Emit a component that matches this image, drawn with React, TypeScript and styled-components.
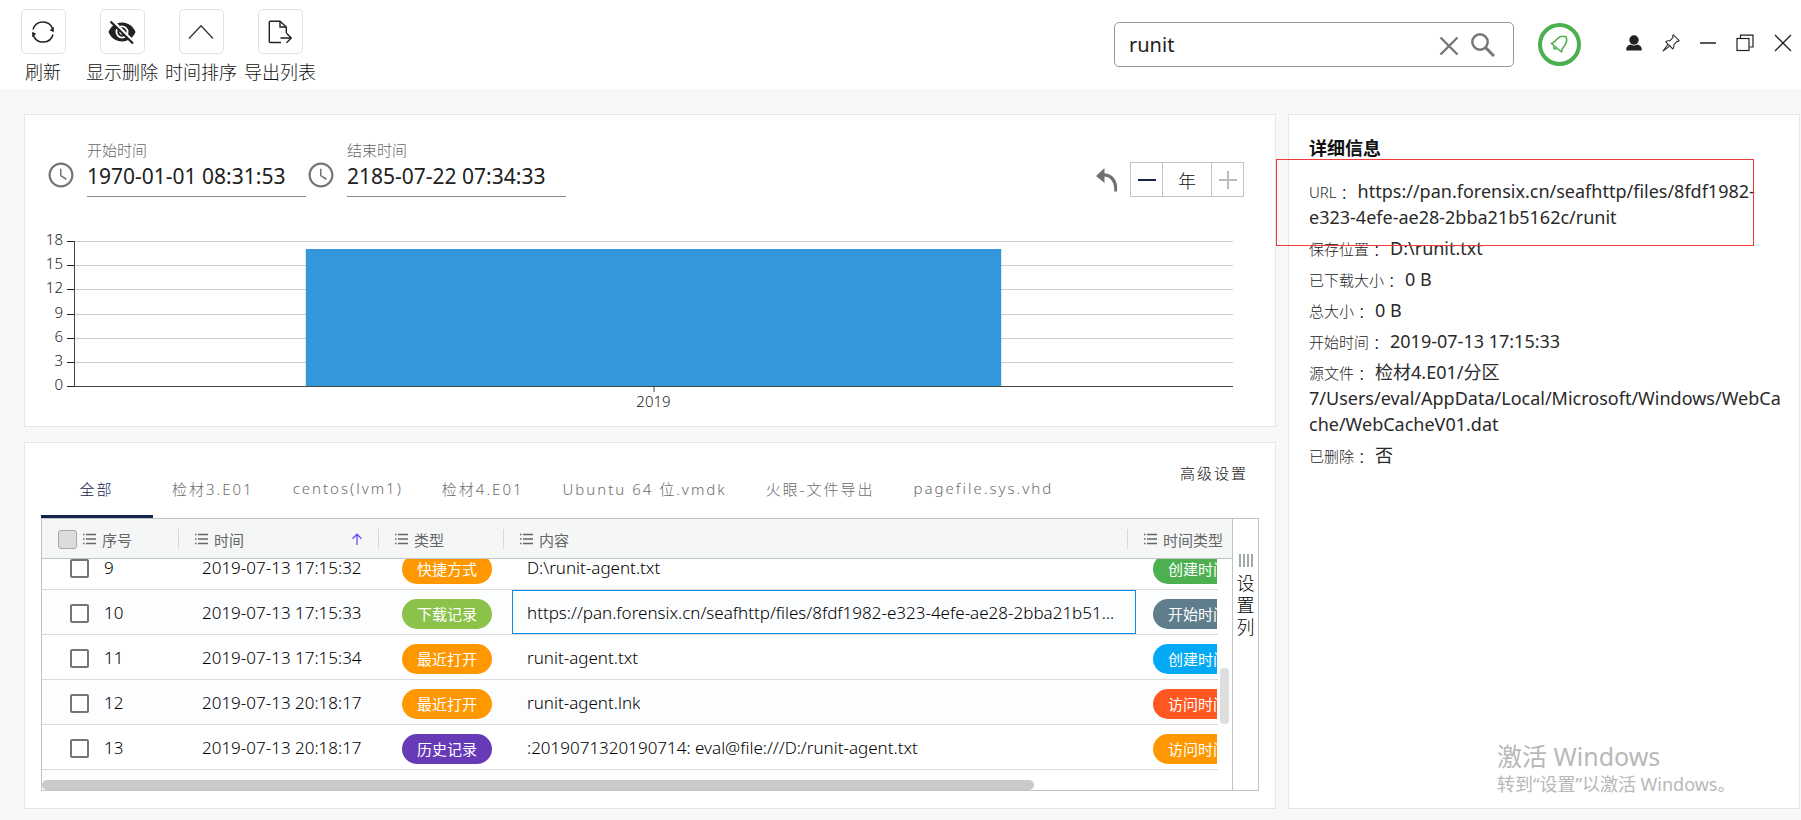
import React, { useLayoutEffect, useRef, useState } from "react";
import styled, { createGlobalStyle } from "styled-components";

const GlobalStyle = createGlobalStyle`
  *, *::before, *::after { box-sizing: border-box; }
  body {
    margin: 0;
    background: #f8f8f8;
    color: #111;
    font-family: "Noto Sans", "Noto Sans CJK SC", sans-serif;
    font-weight: 300;
    font-size: 18px;
  }
  button, input { font: inherit; color: inherit; }
`;

const Page = styled.div`
  min-height: 100vh;
  display: flex;
  flex-direction: column;
`;

/* ---------- top bar ---------- */

const TopBar = styled.header`
  height: 89px;
  flex: none;
  display: flex;
  align-items: flex-start;
  justify-content: space-between;
  background: #fff;
`;

const Tools = styled.nav`
  display: flex;
  gap: 7px;
  padding: 9px 0 0 7px;
`;

const ToolButton = styled.button`
  width: 72px;
  padding: 0;
  border: 0;
  background: none;
  display: flex;
  flex-direction: column;
  align-items: center;
  gap: 6px;
  line-height: 24px;
  white-space: nowrap;
  cursor: pointer;
`;

const ToolIcon = styled.span`
  width: 45px;
  height: 45px;
  border: 1px solid #e2e2e2;
  border-radius: 5px;
  display: flex;
  align-items: center;
  justify-content: center;
`;

const TopRight = styled.div`
  display: flex;
  align-items: center;
  padding: 22px 9px 0 0;
`;

const SearchBox = styled.form`
  width: 400px;
  height: 45px;
  display: flex;
  align-items: center;
  gap: 12px;
  padding: 0 18px 0 14px;
  border: 1px solid #999;
  border-radius: 5px;
  color: #757575;
`;

const SearchInput = styled.input`
  flex: 1;
  min-width: 0;
  padding: 0;
  border: 0;
  outline: 0;
  background: none;
  color: #212121;
  font-size: 20px;
  font-weight: 400;
  line-height: 28px;
`;

const IconButton = styled.button`
  padding: 0;
  border: 0;
  background: none;
  display: flex;
  cursor: pointer;
`;

const Bell = styled.button`
  width: 43px;
  height: 43px;
  margin: 0 45px 0 24px;
  padding: 0;
  border: 4px solid #4caf50;
  border-radius: 50%;
  background: #fff;
  color: #4caf50;
  display: flex;
  align-items: center;
  justify-content: center;
`;

const WindowControls = styled.div`
  display: flex;
  gap: 20px;
  padding-bottom: 4px;
`;

/* ---------- page body ---------- */

const Main = styled.main`
  flex: 1;
  display: grid;
  grid-template-columns: minmax(0, 1fr) 512px;
  gap: 12px;
  padding: 25px 1px 11px 24px;
`;

const LeftColumn = styled.div`
  display: flex;
  flex-direction: column;
  gap: 15px;
`;

const Panel = styled.section`
  background: #fff;
  border: 1px solid #e6e6e6;
`;

/* ---------- timeline ---------- */

const TimelinePanel = styled(Panel)`
  height: 313px;
  padding: 25px 31px 0 21px;
`;

const TimelineHead = styled.div`
  display: flex;
  align-items: flex-end;
`;

const ClockIcon = styled.svg`
  width: 30px;
  height: 30px;
  margin-bottom: 7px;
  fill: #757575;
  flex: none;
`;

const DateField = styled.label`
  width: 219px;
  margin-left: 11px;
  display: block;
  color: #666;
  font-size: 15px;
  line-height: 20px;
`;

const DateInput = styled.input`
  display: block;
  width: 100%;
  height: 37px;
  padding: 0 0 5px;
  border: 0;
  border-bottom: 1px solid #8c8c8c;
  outline: 0;
  background: none;
  color: #212121;
  font-size: 21px;
  font-weight: 400;
`;

const ZoomTools = styled.div`
  margin-left: auto;
  display: flex;
  align-items: center;
`;

const UndoButton = styled(IconButton)`
  margin-right: 12px;
`;

const ZoomButton = styled.button<{ $wide?: boolean }>`
  width: ${(p) => (p.$wide ? 50 : 33)}px;
  height: 35px;
  margin-left: -1px;
  padding: 0;
  border: 1px solid #c4c4c4;
  background: #fff;
  display: flex;
  align-items: center;
  justify-content: center;
`;

const Chart = styled.div`
  display: flex;
  margin: 28px 11px 0 0;
  height: 190px;
`;

const AxisSvg = styled.svg`
  width: 28px;
  height: 190px;
  flex: none;
  overflow: visible;
  font-size: 15px;
  fill: #222;
`;

const PlotSvg = styled.svg`
  flex: 1;
  min-width: 0;
  height: 190px;
  overflow: visible;
  font-size: 15px;
  fill: #222;
`;

/* ---------- records ---------- */

const RecordsPanel = styled(Panel)`
  flex: 1;
  display: flex;
  flex-direction: column;
  padding: 17px 16px 17px;
`;

const TabRow = styled.div`
  display: flex;
  align-items: flex-start;
  justify-content: space-between;
`;

const Tabs = styled.div`
  display: flex;
`;

const Tab = styled.button<{ $active?: boolean }>`
  min-width: ${(p) => (p.$active ? 112 : 0)}px;
  height: 58px;
  padding: 1px 20px 0 19px;
  border: 0;
  border-bottom: 3px solid ${(p) => (p.$active ? "#14234b" : "transparent")};
  background: none;
  color: ${(p) => (p.$active ? "#14234b" : "#6c6c6c")};
  font-size: 15px;
  letter-spacing: 2px;
  white-space: nowrap;
`;

const AdvancedButton = styled.button`
  padding: 0 11px 0 0;
  border: 0;
  background: none;
  font-size: 15px;
  line-height: 26px;
  letter-spacing: 2px;
`;

const GridFrame = styled.div`
  flex: 1;
  display: flex;
  min-height: 270px;
  border: 1px solid #bdc3c7;
`;

const GridArea = styled.div`
  position: relative;
  flex: 1;
  min-width: 0;
  display: flex;
  flex-direction: column;
`;

const Table = styled.table`
  display: block;
`;

const Head = styled.thead`
  display: block;
`;

const HeadRow = styled.tr`
  display: grid;
  grid-template-columns: 137px 200px 125px minmax(0, 1fr) 104px;
  height: 40px;
  background: #f5f7f7;
  border-bottom: 1px solid #bdc3c7;
`;

const HeadCell = styled.th`
  display: flex;
  align-items: center;
  gap: 6px;
  height: 20px;
  margin-top: 10px;
  padding: 0 16px;
  border-right: 1px solid #d5d9db;
  color: #666;
  font-size: 15px;
  font-weight: 400;
  white-space: nowrap;
  &:last-child { border-right: 0; padding-right: 0; }
  & > svg:last-child { margin-left: auto; }
`;

const Body = styled.tbody`
  display: block;
  height: 217px;
  margin-right: 14px;
  overflow: hidden;
`;

const Row = styled.tr<{ $even?: boolean }>`
  display: grid;
  grid-template-columns: 137px 200px 125px minmax(0, 1fr) 82px;
  height: 45px;
  padding-left: 8px;
  background: ${(p) => (p.$even ? "#fcfdfe" : "#fff")};
  border-bottom: 1px solid #d9dcde;
`;

const Cell = styled.td<{ $selected?: boolean }>`
  display: flex;
  align-items: center;
  min-width: 0;
  padding: 2px 14px 0;
  border: 1px solid ${(p) => (p.$selected ? "#0a8fe6" : "transparent")};
  overflow: hidden;
  color: #000;
  font-size: 17px;
  line-height: 24px;
  white-space: nowrap;
  &:last-child { padding-left: 16px; }
`;

const Ellipsis = styled.span`
  overflow: hidden;
  text-overflow: ellipsis;
`;

const NumberLabel = styled.label`
  display: flex;
  align-items: center;
  gap: 15px;
  padding-left: 5px;
`;

const Check = styled.input<{ $solid?: boolean }>`
  appearance: none;
  flex: none;
  width: 19px;
  height: 19px;
  margin: 0;
  border: ${(p) => (p.$solid ? "1px solid #a8a8a8" : "2px solid #757575")};
  border-radius: ${(p) => (p.$solid ? 3 : 2)}px;
  background: ${(p) => (p.$solid ? "#dcdcdc" : "#fff")};
`;

const Badge = styled.span<{ $color: string }>`
  flex: none;
  height: 30px;
  margin-top: 2px;
  padding: 0 15px;
  border-radius: 15px;
  background: ${(p) => p.$color};
  color: #fff;
  font-size: 15px;
  font-weight: 400;
  line-height: 30px;
`;

const VerticalThumb = styled.div`
  position: absolute;
  top: 149px;
  right: 3px;
  width: 9px;
  height: 56px;
  border-radius: 4px;
  background: #dedede;
`;

const HorizontalThumb = styled.div`
  width: 83.4%;
  height: 10px;
  margin-top: auto;
  border-radius: 5px;
  background: #cacaca;
`;

const SideBar = styled.aside`
  width: 26px;
  border-left: 1px solid #bdc3c7;
`;

const SideButton = styled.button`
  width: 100%;
  padding: 35px 0 0;
  border: 0;
  background: none;
  display: flex;
  flex-direction: column;
  align-items: center;
  gap: 5px;
`;

const SideLabel = styled.span`
  width: 18px;
  color: #000;
  line-height: 22px;
`;

/* ---------- details ---------- */

const Details = styled(Panel)`
  position: relative;
  padding: 21px 18px 0 20px;
`;

const DetailsTitle = styled.h2`
  margin: 0 0 18px;
  font-size: 18px;
  line-height: 24px;
  font-weight: 700;
`;

const Info = styled.p`
  margin: 0 0 5px;
  color: #2a2a2a;
  font-weight: 400;
  line-height: 26px;
  overflow-wrap: break-word;
`;

const InfoLabel = styled.span`
  color: #222;
  font-size: 15px;
  font-weight: 300;
  line-height: 18px;
`;

const Colon = styled.span`
  padding: 0 2px 0 4px;
`;

const Highlight = styled.div`
  position: absolute;
  left: -13px;
  top: 44px;
  width: 478px;
  height: 87px;
  border: 1px solid #f03c3c;
  pointer-events: none;
`;

const Watermark = styled.div`
  position: absolute;
  left: 208px;
  bottom: 11px;
  color: #b8b8b8;
  font-size: 18px;
  font-weight: 400;
  line-height: 26px;
`;

const WatermarkTitle = styled.div`
  font-size: 25px;
  line-height: 30px;
`;

/* ---------- icons ---------- */

const RefreshIcon = () => (
  <svg width="24" height="24" viewBox="0 0 24 24" fill="none" stroke="#212121" strokeWidth="1.5">
    <path d="M2 9.5A10.3 10.3 0 0 1 21.5 8.4" />
    <path d="M22 14.5A10.3 10.3 0 0 1 2.5 15.6" />
    <path d="M22.8 6.800v5.400l-4-2z M1.200 17.200v-5.400l4 2z" fill="#212121" stroke="none" />
  </svg>
);

const HiddenIcon = () => (
  <svg width="28" height="26" viewBox="0 0 28 26" fill="none">
    <path d="M0.5 13C3 7 8 3.500 14 3.500S25 7 27.500 13C25 19 20 22.500 14 22.500S3 19 .5 13z" fill="#212121" />
    <circle cx="14" cy="13" r="5.600" stroke="#fff" strokeWidth="1.800" />
    <circle cx="14" cy="13" r="2.600" fill="#fff" />
    <path d="M4.500 1.500l23 23" stroke="#fff" strokeWidth="2.500" />
    <path d="M2.500 2.500l22.500 22" stroke="#212121" strokeWidth="2.200" />
  </svg>
);

const UpIcon = () => (
  <svg width="26" height="16" viewBox="0 0 26 16" fill="none" stroke="#333" strokeWidth="1.300">
    <path d="M1 14.500L13 1.800 25 14.500" />
  </svg>
);

const ExportIcon = () => (
  <svg width="24" height="24" viewBox="0 0 24 24" fill="none" stroke="#212121" strokeWidth="1.400">
    <path d="M13 22.500H2.300q-1 0-1-1V2.200q0-1 1-1H12L18.300 7v6" />
    <path d="M12 1.500V7h6" />
    <path d="M12.500 18H23M18.500 13.200L23.300 18l-4.800 4.800" />
  </svg>
);

const ClearIcon = () => (
  <svg width="20" height="20" viewBox="0 0 20 20" stroke="currentColor" strokeWidth="2.300">
    <path d="M1.500 2.500l17 17M18.500 2.500l-17 17" />
  </svg>
);

const SearchIcon = () => (
  <svg width="24" height="24" viewBox="0 0 24 24" fill="none" stroke="currentColor">
    <circle cx="9" cy="9" r="7.700" strokeWidth="2.400" />
    <path d="M14.500 14.500l8.500 8.500" strokeWidth="3" />
  </svg>
);

const BellIcon = () => (
  <svg width="19" height="19" viewBox="0 0 19 19" fill="none" stroke="currentColor" strokeWidth="1.600" strokeLinejoin="round">
    <path d="M1.500 8.500C4.500 7 6 5.500 8 3.200 10 1 13.500 1 16 1.800c1 3 .8 6.200-1.200 8.400-2 2.300-3.200 4-3.300 6.800z" />
    <path d="M3.500 11.500c.2 2 1 2.800 3 2.500" />
  </svg>
);

const UserIcon = () => (
  <svg width="16" height="18" viewBox="0 0 16 18" fill="#212121">
    <circle cx="8" cy="6" r="4.700" />
    <path d="M.3 16.500v-1.700c0-2.300 2.200-3.800 4.500-4.300q3.200 2 6.400 0c2.300.5 4.500 2 4.500 4.300v1.700z" />
  </svg>
);

const PinIcon = () => (
  <svg width="18" height="18" viewBox="0 0 18 18" fill="none" stroke="#333" strokeWidth="1.100" strokeLinejoin="round">
    <path d="M11.300.8l5.900 5.900-1.300.8-.8-.3-3.300 3.600c.5 1.800.2 3-.9 4.200L3.700 7.800C4.900 6.700 6 6.500 7.800 6.900l3.300-3.500-.5-1.400z" />
    <path d="M6 10.300L1 17l6.700-4.900" />
  </svg>
);

const MinimizeIcon = () => (
  <svg width="16" height="18" viewBox="0 0 16 18" stroke="#212121" strokeWidth="1.500">
    <path d="M0 9h16" />
  </svg>
);

const RestoreIcon = () => (
  <svg width="18" height="18" viewBox="0 0 18 18" fill="none" stroke="#212121" strokeWidth="1.200">
    <rect x="1" y="4.500" width="12" height="12" />
    <path d="M4.500 4V1.200H17V13h-3.500" />
  </svg>
);

const CloseIcon = () => (
  <svg width="18" height="18" viewBox="0 0 18 18" stroke="#212121" strokeWidth="1.300">
    <path d="M1 1l16 16M17 1L1 17" />
  </svg>
);

const UndoIcon = () => (
  <svg width="23" height="25" viewBox="0 0 23 25" fill="#707070">
    <path d="M0 9L8.500 1v5.200C16.500 7 22.500 13 21 24.500h-2.800C18.800 15.500 15 10.200 8.500 9.500v6.500z" />
  </svg>
);

const MenuIcon = () => (
  <svg width="13" height="12" viewBox="0 0 13 12" stroke="#666" strokeWidth="1.400">
    <path d="M0 1.500h1.500M3 1.500h10M0 6h1.500M3 6h10M0 10.500h1.500M3 10.500h10" />
  </svg>
);

const SortIcon = () => (
  <svg width="10" height="12" viewBox="0 0 10 12" fill="none" stroke="#6a4df5" strokeWidth="1.300">
    <path d="M5 12V1.200M.5 5.700L5 1.200l4.500 4.500" />
  </svg>
);

const ColumnsIcon = () => (
  <svg width="14" height="13" viewBox="0 0 14 13" stroke="#7f8c8d" strokeWidth="1.500">
    <path d="M1 0v13M5 0v13M9 0v13M13 0v13" />
  </svg>
);

const Clock = () => (
  <ClockIcon viewBox="0 0 24 24" aria-hidden="true">
    <path d="M11.99 2C6.47 2 2 6.480 2 12s4.470 10 9.990 10C17.520 22 22 17.520 22 12S17.520 2 11.990 2zM12 20.200c-4.500 0-8.200-3.700-8.200-8.200S7.500 3.800 12 3.800s8.200 3.700 8.200 8.200-3.700 8.200-8.200 8.200zM12.400 7H11.200v5.700l4.800 3.200.7-1.100-4.300-2.700z" />
  </ClockIcon>
);

/* ---------- data ---------- */

const tools = [
  { label: "刷新", icon: <RefreshIcon /> },
  { label: "显示删除", icon: <HiddenIcon /> },
  { label: "时间排序", icon: <UpIcon /> },
  { label: "导出列表", icon: <ExportIcon /> },
];

const tabs = ["全部", "检材3.E01", "centos(lvm1)", "检材4.E01", "Ubuntu 64 位.vmdk", "火眼-文件导出", "pagefile.sys.vhd"];

const fileUrl = "https://pan.forensix.cn/seafhttp/files/8fdf1982-e323-4efe-ae28-2bba21b5162c/runit";

const records = [
  { no: 9, time: "2019-07-13 17:15:32", type: "快捷方式", color: "#ff9800", text: "D:\\runit-agent.txt", kind: "创建时间", kindColor: "#4caf50" },
  { no: 10, time: "2019-07-13 17:15:33", type: "下载记录", color: "#8bc34a", text: fileUrl, kind: "开始时间", kindColor: "#607d8b" },
  { no: 11, time: "2019-07-13 17:15:34", type: "最近打开", color: "#ff9800", text: "runit-agent.txt", kind: "创建时间", kindColor: "#03a9f4" },
  { no: 12, time: "2019-07-13 20:18:17", type: "最近打开", color: "#ff9800", text: "runit-agent.lnk", kind: "访问时间", kindColor: "#ff5722" },
  { no: 13, time: "2019-07-13 20:18:17", type: "历史记录", color: "#673ab7", text: ":2019071320190714: eval@file:///D:/runit-agent.txt", kind: "访问时间", kindColor: "#ff9800" },
];

const details = [
  { label: "URL", value: fileUrl },
  { label: "保存位置", value: "D:\\runit.txt" },
  { label: "已下载大小", value: "0 B" },
  { label: "总大小", value: "0 B" },
  { label: "开始时间", value: "2019-07-13 17:15:33" },
  { label: "源文件", value: "检材4.E01/分区7/Users/eval/AppData/Local/Microsoft/Windows/WebCache/WebCacheV01.dat" },
  { label: "已删除", value: "否" },
];

const AXIS_TOP = 16;
const AXIS_HEIGHT = 145;
const AXIS_MAX = 18;
const scaleY = (value: number) => Math.round(AXIS_TOP + AXIS_HEIGHT * (1 - value / AXIS_MAX));
const ticks = [18, 15, 12, 9, 6, 3, 0];

function TimelineChart() {
  return (
    <Chart>
      <AxisSvg>
        {ticks.map((t) => (
          <g key={t}>
            <text x="17" y={scaleY(t) + 4} textAnchor="end">{t}</text>
            <rect x="21" y={scaleY(t)} width="7" height="1" />
          </g>
        ))}
      </AxisSvg>
      <PlotSvg>
        {ticks.map((t) => (
          <rect key={t} x="0" y={scaleY(t)} width="100%" height="1" fill="#ccc" />
        ))}
        <rect x="20%" y={scaleY(17)} width="60%" height={scaleY(0) - scaleY(17)} fill="#3398db" />
        <rect x="0" y={scaleY(0)} width="100%" height="1" fill="#444" />
        <rect x="0" y={AXIS_TOP} width="1" height={AXIS_HEIGHT} fill="#444" />
        <rect x="50%" y={scaleY(0)} width="1" height="6" fill="#444" />
        <text x="50%" y={scaleY(0) + 21} textAnchor="middle">2019</text>
      </PlotSvg>
    </Chart>
  );
}

function RecordsTable() {
  const body = useRef<HTMLTableSectionElement>(null);
  useLayoutEffect(() => {
    if (body.current) body.current.scrollTop = 14;
  }, []);
  return (
    <GridArea>
      <Table>
        <Head>
          <HeadRow>
            <HeadCell scope="col">
              <Check type="checkbox" $solid aria-label="全选" />
              <MenuIcon /><span>序号</span>
            </HeadCell>
            <HeadCell scope="col"><MenuIcon /><span>时间</span><SortIcon /></HeadCell>
            <HeadCell scope="col"><MenuIcon /><span>类型</span></HeadCell>
            <HeadCell scope="col"><MenuIcon /><span>内容</span></HeadCell>
            <HeadCell scope="col"><MenuIcon /><span>时间类型</span></HeadCell>
          </HeadRow>
        </Head>
        <Body ref={body}>
          {records.map((r) => (
            <Row key={r.no} $even={r.no % 2 === 0}>
              <Cell>
                <NumberLabel>
                  <Check type="checkbox" />
                  {r.no}
                </NumberLabel>
              </Cell>
              <Cell>{r.time}</Cell>
              <Cell><Badge $color={r.color}>{r.type}</Badge></Cell>
              <Cell $selected={r.no === 10}><Ellipsis>{r.text}</Ellipsis></Cell>
              <Cell><Badge $color={r.kindColor}>{r.kind}</Badge></Cell>
            </Row>
          ))}
          <Row $even />
        </Body>
      </Table>
      <VerticalThumb />
      <HorizontalThumb />
    </GridArea>
  );
}

export default function App() {
  const [query, setQuery] = useState("runit");
  return (
    <Page>
      <GlobalStyle />
      <TopBar>
        <Tools>
          {tools.map((t) => (
            <ToolButton key={t.label} type="button">
              <ToolIcon>{t.icon}</ToolIcon>
              {t.label}
            </ToolButton>
          ))}
        </Tools>
        <TopRight>
          <SearchBox onSubmit={(e) => e.preventDefault()}>
            <SearchInput aria-label="搜索" value={query} onChange={(e) => setQuery(e.target.value)} />
            <IconButton type="button" aria-label="清除" onClick={() => setQuery("")}><ClearIcon /></IconButton>
            <IconButton type="submit" aria-label="搜索"><SearchIcon /></IconButton>
          </SearchBox>
          <Bell type="button" aria-label="通知"><BellIcon /></Bell>
          <WindowControls>
            <IconButton type="button" aria-label="用户"><UserIcon /></IconButton>
            <IconButton type="button" aria-label="置顶"><PinIcon /></IconButton>
            <IconButton type="button" aria-label="最小化"><MinimizeIcon /></IconButton>
            <IconButton type="button" aria-label="还原"><RestoreIcon /></IconButton>
            <IconButton type="button" aria-label="关闭"><CloseIcon /></IconButton>
          </WindowControls>
        </TopRight>
      </TopBar>
      <Main>
        <LeftColumn>
          <TimelinePanel>
            <TimelineHead>
              <Clock />
              <DateField>开始时间<DateInput defaultValue="1970-01-01 08:31:53" /></DateField>
              <Clock />
              <DateField>结束时间<DateInput defaultValue="2185-07-22 07:34:33" /></DateField>
              <ZoomTools>
                <UndoButton type="button" aria-label="撤销"><UndoIcon /></UndoButton>
                <ZoomButton type="button" aria-label="缩小">
                  <svg width="18" height="18" viewBox="0 0 18 18" stroke="#14234b" strokeWidth="2"><path d="M0 9h18" /></svg>
                </ZoomButton>
                <ZoomButton type="button" $wide>年</ZoomButton>
                <ZoomButton type="button" aria-label="放大">
                  <svg width="18" height="18" viewBox="0 0 18 18" stroke="#bdbdbd" strokeWidth="2"><path d="M0 9h18M9 0v18" /></svg>
                </ZoomButton>
              </ZoomTools>
            </TimelineHead>
            <TimelineChart />
          </TimelinePanel>
          <RecordsPanel>
            <TabRow>
              <Tabs role="tablist">
                {tabs.map((t, i) => (
                  <Tab key={t} type="button" role="tab" aria-selected={i === 0} $active={i === 0}>{t}</Tab>
                ))}
              </Tabs>
              <AdvancedButton type="button">高级设置</AdvancedButton>
            </TabRow>
            <GridFrame>
              <RecordsTable />
              <SideBar>
                <SideButton type="button">
                  <ColumnsIcon />
                  <SideLabel>设置列</SideLabel>
                </SideButton>
              </SideBar>
            </GridFrame>
          </RecordsPanel>
        </LeftColumn>
        <Details>
          <DetailsTitle>详细信息</DetailsTitle>
          {details.map((d) => (
            <Info key={d.label}>
              <InfoLabel>{d.label}<Colon>：</Colon></InfoLabel>
              {d.value}
            </Info>
          ))}
          <Highlight />
          <Watermark>
            <WatermarkTitle>激活 Windows</WatermarkTitle>
            转到“设置”以激活 Windows。
          </Watermark>
        </Details>
      </Main>
    </Page>
  );
}
